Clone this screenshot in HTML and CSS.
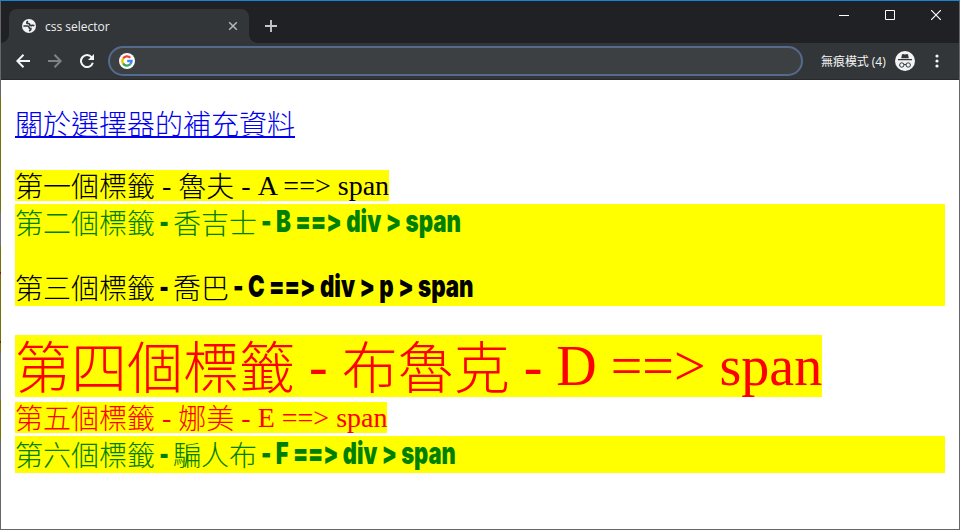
FILE: index.html
```
<!DOCTYPE html>
<html lang="zh-Hant">
<head>
<meta charset="utf-8">
<title>css selector</title>
<link rel="stylesheet" href="styles.css">
</head>
<body>
<div class="window">
  <header class="tabstrip">
    <div class="tab">
      <svg class="globe" width="16" height="16" viewBox="0 0 16 16"><circle cx="8" cy="8" r="7" fill="#f1f3f4"/><path d="M2.400 8h4q1.600.2 1.800 1.600.2 1 1.600.9.400 1.600-1.800 2.400M7 3.200q-1.400.6-1.200 1.800.4.600 2 .5.800.2.900 1.600 1.400.8 2.400.3 1-.4 2.300.3" fill="none" stroke="#35363a" stroke-width="1.700"/></svg>
      <span class="tab-title">css selector</span>
      <svg class="tab-close" width="10" height="10" viewBox="0 0 10 10"><path d="M1.200 1.200l7.600 7.600m0-7.600L1.200 8.800" stroke="#b6b8ba" stroke-width="1.500"/></svg>
    </div>
    <svg class="newtab" width="12" height="12" viewBox="0 0 12 12"><path d="M6 0v12M0 6h12" stroke="#c4c6c8" stroke-width="1.900"/></svg>
    <div class="controls">
      <svg width="10" height="10" viewBox="0 0 10 10"><path d="M0 5.500h10" stroke="#fff"/></svg>
      <svg width="10" height="10" viewBox="0 0 10 10"><path d="M.5.5h9v9h-9z" fill="none" stroke="#fff"/></svg>
      <svg width="10" height="10" viewBox="0 0 10 10"><path d="M0 0l10 10M10 0L0 10" stroke="#fff" stroke-width="1.200"/></svg>
    </div>
  </header>
  <nav class="toolbar">
    <svg class="nav" width="14" height="14" viewBox="0 0 14 14"><path d="M14 7H1.500M7.500.8L1.300 7l6.200 6.200" fill="none" stroke="#f4f5f6" stroke-width="2"/></svg>
    <svg class="nav" width="14" height="14" viewBox="0 0 14 14"><path d="M0 7h12.500M6.500.8L12.700 7l-6.200 6.200" fill="none" stroke="#808386" stroke-width="2"/></svg>
    <svg class="nav" width="14" height="14" viewBox="0 0 14 14"><path d="M11.700 3.300A6 6 0 1 0 12.800 8.700" fill="none" stroke="#f4f5f6" stroke-width="2"/><path d="M14 0v6H8z" fill="#f4f5f6"/></svg>
    <div class="omnibox">
      <svg width="16" height="16" viewBox="0 0 16 16"><circle cx="8" cy="8" r="8" fill="#fff"/><g fill="none" stroke-width="2.300"><path d="M4.100 5.500A4.600 4.600 0 0 1 11.300 4.800" stroke="#ea4335"/><path d="M4.100 5.500a4.600 4.600 0 0 0 0 5" stroke="#fbbc05"/><path d="M4.100 10.500a4.600 4.600 0 0 0 6.900.9" stroke="#34a853"/><path d="M8.200 8h4.400a4.600 4.600 0 0 1-1.600 3.400" stroke="#4285f4"/></g></svg>
    </div>
    <span class="mode">無痕模式 (4)</span>
    <svg class="incognito" width="20" height="20" viewBox="0 0 20 20"><circle cx="10" cy="10" r="10" fill="#f1f3f4"/><path d="M7 3.500l.9-.5 2.100.6 2.100-.6.9.5.8 3.700H6.200zM3 8h14v1.200H3z" fill="#35363a"/><g fill="none" stroke="#35363a" stroke-width="1"><circle cx="6.800" cy="14" r="2.200"/><circle cx="13.200" cy="14" r="2.200"/><path d="M9 13.600q1-.7 2 0"/></g></svg>
    <svg class="dots" width="4" height="14" viewBox="0 0 4 14"><g fill="#f4f5f6"><circle cx="2" cy="2" r="1.600"/><circle cx="2" cy="7" r="1.600"/><circle cx="2" cy="12" r="1.600"/></g></svg>
  </nav>
  <main class="page">
    <a class="link"><span class="low">關於選擇器的補充資料</span></a>
    <span class="mark first"><span class="low">第一個標籤</span> - <span class="low">魯夫</span> - A ==&gt; span</span>
    <div class="block pair">
      <p class="line green"><span class="han">第二個標籤</span><b class="dash">-</b><span class="han">香吉士</span><span class="impact"><b>- B ==&gt; div &gt; span</b></span></p>
      <p class="line"><span class="han">第三個標籤</span><b class="dash">-</b><span class="han">喬巴</span><span class="impact"><b>- C ==&gt; div &gt; p &gt; span</b></span></p>
    </div>
    <span class="mark large"><span class="low">第四個標籤</span> - <span class="low">布魯克</span> - D ==&gt; span</span>
    <span class="mark red"><span class="low">第五個標籤</span> - <span class="low">娜美</span> - E ==&gt; span</span>
    <div class="block single">
      <p class="line green"><span class="han">第六個標籤</span><b class="dash">-</b><span class="han">騙人布</span><span class="impact narrow"><b>- F ==&gt; div &gt; span</b></span></p>
    </div>
  </main>
</div>
</body>
</html>
```
FILE: styles.css
```
* { box-sizing: border-box; }
body { margin: 0; background: #fff; }
svg { display: block; flex: none; }
.window {
  height: 530px;
  border: 1px solid #666669;
  border-top-color: #1883d7;
  border-left: 0;
  position: relative;
  padding-left: 1px;
  overflow: hidden;
}
.window::before {
  content: "";
  position: absolute;
  left: 0;
  top: 0;
  width: 1px;
  height: 530px;
  background: linear-gradient(#666 0 97px, #77700c 97px 211px, #707078 211px 245px, #77700c 245px 271px, #8a1020 271px 273px, #77700c 273px 340px, #8a1020 340px 342px, #77700c 342px 352px, #707078 352px 399px, #77700c 399px 439px, #66676c 439px);
}
.tabstrip { height: 42px; background: #202124; display: flex; align-items: flex-start; }
.tab {
  width: 240px;
  height: 34px;
  margin: 8px 0 0 8px;
  padding: 0 11px 0 12px;
  background: #323639;
  border-radius: 8px 8px 0 0;
  display: flex;
  align-items: center;
  position: relative;
}
.tab::before, .tab::after {
  content: "";
  position: absolute;
  bottom: 0;
  width: 8px;
  height: 8px;
}
.tab::before { left: -8px; background: radial-gradient(circle at 0 0, transparent 7.5px, #323639 8px); }
.tab::after { right: -8px; background: radial-gradient(circle at 100% 0, transparent 7.5px, #323639 8px); }
.tab-title { flex: 1; margin: 2px 0 0 8px; font: 12px/16px "Open Sans", sans-serif; color: #eeeff0; }
.newtab { margin: 19px 0 0 16px; }
.controls { margin: 9px 18px 0 auto; display: flex; gap: 36px; }
.toolbar {
  height: 37px;
  background: #323639;
  border-bottom: 1px solid #28292c;
  display: flex;
  align-items: center;
  padding-left: 15px;
}
.nav { margin-right: 18px; }
.omnibox {
  width: 695px;
  height: 30px;
  margin-left: -4px;
  border: 2px solid #566a8e;
  border-radius: 15px;
  background: #3c4043;
  display: flex;
  align-items: center;
  padding-left: 9px;
}
.mode {
  width: 66px;
  margin: 2px 8px 0 18px;
  white-space: nowrap;
  font: 12px/18px "Open Sans", "Noto Sans CJK TC", sans-serif;
  letter-spacing: -.05px;
  color: #f4f5f6;
}
.dots { margin-left: 20px; }
.page {
  padding: 27px 14px 0;
  display: flex;
  flex-direction: column;
  align-items: flex-start;
  font: 300 28px/31px "Liberation Serif", "Noto Sans CJK TC", serif;
  white-space: nowrap;
}
.low { vertical-align: -2px; line-height: 1px; }
.link { height: 31px; margin-top: 1px; color: #00e; }
.link .low {
  text-decoration: underline 2px;
  text-underline-offset: 1px;
  text-decoration-skip-ink: none;
}
.mark { background: #ff0; height: 31px; }
.first { margin-top: 31px; }
.block { width: 930px; background: #ff0; }
.pair { height: 102px; margin-top: 3px; }
.single { height: 37px; margin-top: 3px; }
.line { margin: 0; height: 37px; display: flex; align-items: baseline; line-height: 37px; }
.line + .line { margin-top: 28px; }
.green { color: #008000; }
.han { font-family: "Noto Sans CJK TC", sans-serif; }
.dash { width: 18px; text-align: center; font: 900 28px/33px Inter, sans-serif; transform: translateY(-2px) scaleX(.72); }
.impact { margin-left: 4px; height: 37px; }
.impact b {
  display: inline-block;
  font: 900 30px/37px Inter, sans-serif;
  font-variant-ligatures: none;
  font-feature-settings: "calt" 0;
  transform-origin: 0 50%;
  transform: translateY(-2px) scaleX(.743);
}
.narrow b { transform: translateY(-2px) scaleX(.73); }
.large { margin-top: 29px; height: 62px; font-size: 56px; line-height: 62px; color: red; }
.large .low { vertical-align: -3px; }
.red { margin-top: 5px; color: red; }
```
